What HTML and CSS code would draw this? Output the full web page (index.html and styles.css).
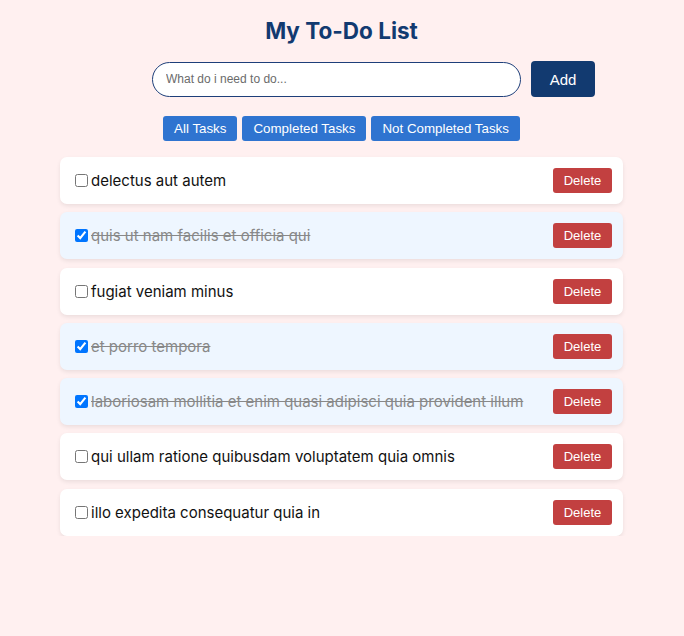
FILE: index.html
```html
<!DOCTYPE html>
<html>
<head>
<meta charset="utf-8">
<link rel="stylesheet" href="styles.css">
</head>
<body>
<div class="app">
  <h1 class="title">My To-Do List</h1>
  <form class="add-form">
    <input class="add-input" type="text" placeholder="What do i need to do...">
    <button class="add-btn" type="button">Add</button>
  </form>
  <div class="filters">
    <button class="filter-btn" type="button">All Tasks</button>
    <button class="filter-btn" type="button">Completed Tasks</button>
    <button class="filter-btn" type="button">Not Completed Tasks</button>
  </div>
  <ul class="list">
    <li class="item"><label class="item-label"><input type="checkbox" class="check"><span class="item-text">delectus aut autem</span></label><button class="del-btn" type="button">Delete</button></li>
    <li class="item done"><label class="item-label"><input type="checkbox" class="check" checked><span class="item-text">quis ut nam facilis et officia qui</span></label><button class="del-btn" type="button">Delete</button></li>
    <li class="item"><label class="item-label"><input type="checkbox" class="check"><span class="item-text">fugiat veniam minus</span></label><button class="del-btn" type="button">Delete</button></li>
    <li class="item done"><label class="item-label"><input type="checkbox" class="check" checked><span class="item-text">et porro tempora</span></label><button class="del-btn" type="button">Delete</button></li>
    <li class="item done"><label class="item-label"><input type="checkbox" class="check" checked><span class="item-text">laboriosam mollitia et enim quasi adipisci quia provident illum</span></label><button class="del-btn" type="button">Delete</button></li>
    <li class="item"><label class="item-label"><input type="checkbox" class="check"><span class="item-text">qui ullam ratione quibusdam voluptatem quia omnis</span></label><button class="del-btn" type="button">Delete</button></li>
    <li class="item"><label class="item-label"><input type="checkbox" class="check"><span class="item-text">illo expedita consequatur quia in</span></label><button class="del-btn" type="button">Delete</button></li>
  </ul>
</div>
</body>
</html>
```

FILE: styles.css
```css
html, body {
  margin: 0;
  padding: 0;
  background: #fff0f0;
  font-family: Inter, "Liberation Sans", sans-serif;
}

.app {
  width: 563px;
  margin: 0 0 0 60px;
  padding-top: 16px;
}

.title {
  margin: 0;
  text-align: center;
  font-size: 22.5px;
  line-height: 29px;
  font-weight: 700;
  color: #123a70;
}

.add-form {
  display: flex;
  justify-content: center;
  align-items: center;
  gap: 10px;
  margin-top: 16px;
  padding-left: 64px;
}

.add-input {
  box-sizing: border-box;
  width: 369px;
  height: 35px;
  border: 1px solid #1e3f7a;
  border-radius: 18px;
  padding: 0 13px;
  font-family: "Liberation Sans", Arial, sans-serif;
  font-size: 12px;
  background: #fff;
  outline: none;
}

.add-input::placeholder {
  color: #6b6b6b;
}

.add-btn {
  width: 64px;
  height: 36px;
  border: none;
  border-radius: 4px;
  background: #123a70;
  color: #fff;
  font-family: "Liberation Sans", Arial, sans-serif;
  font-size: 15px;
}

.filters {
  display: flex;
  justify-content: center;
  gap: 5px;
  margin-top: 19px;
}

.filter-btn {
  height: 25px;
  padding: 0 11px;
  border: none;
  border-radius: 3px;
  background: #2f74d0;
  color: #fff;
  font-family: "Liberation Sans", Arial, sans-serif;
  font-size: 13.33px;
}

.list {
  list-style: none;
  margin: 16px 0 0;
  padding: 0;
  display: flex;
  flex-direction: column;
  gap: 8.3px;
}

.item {
  display: flex;
  align-items: center;
  justify-content: space-between;
  background: #fff;
  border-radius: 7px;
  padding: 11px;
  box-shadow: 0 2px 4px rgba(0, 0, 0, 0.08);
}

.item.done {
  background: #eef6ff;
}

.item-label {
  display: flex;
  align-items: center;
  font-size: 15px;
  color: #111;
}

.check {
  width: 13px;
  height: 13px;
  margin: 0 3px 0 4px;
}

.done .item-text {
  color: #888;
  text-decoration: line-through;
}

.del-btn {
  width: 59px;
  height: 25px;
  border: none;
  border-radius: 3px;
  background: #c24040;
  color: #fff;
  font-family: "Liberation Sans", Arial, sans-serif;
  font-size: 13px;
}
```
